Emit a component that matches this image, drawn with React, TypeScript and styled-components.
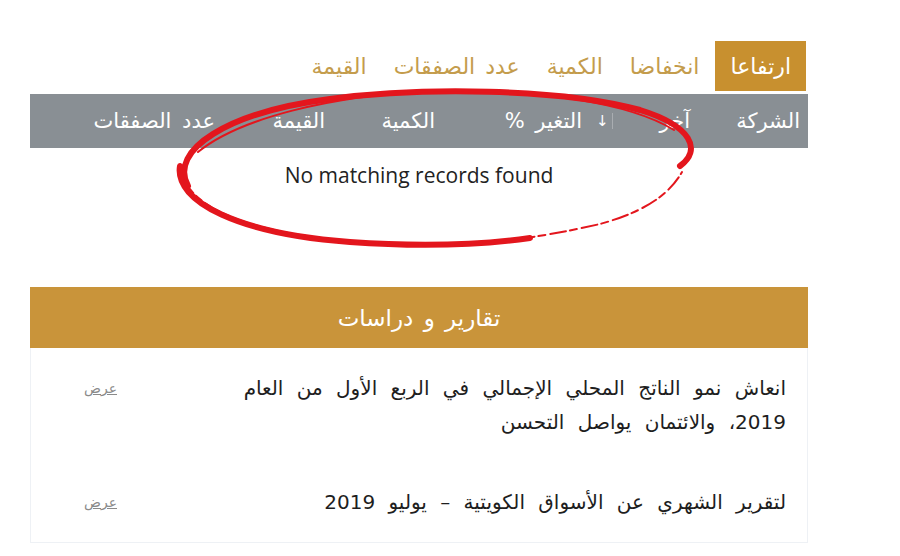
import React from "react";
import styled, { createGlobalStyle } from "styled-components";

const Global = createGlobalStyle`
  html, body { margin: 0; padding: 0; background: #ffffff; }
  body { font-family: "DejaVu Sans", "Noto Sans", sans-serif; }
  * { box-sizing: border-box; }
`;

const Page = styled.div`
  width: 900px;
  height: 556px;
  overflow: hidden;
  padding: 41px 0 0 30px;
  position: relative;
`;

const Column = styled.div`
  width: 778px;
  direction: rtl;
  display: flex;
  flex-direction: column;
`;

const Tabs = styled.div`
  display: flex;
  align-items: stretch;
  height: 50px;
  margin-right: 2px;
  gap: 5px;
`;

const Tab = styled.div<{ $active?: boolean }>`
  display: flex;
  align-items: center;
  padding: 0 ${(p) => (p.$active ? 15 : 11)}px;
  font-size: 22px;
  word-spacing: 3px;
  background: ${(p) => (p.$active ? "#c8902f" : "transparent")};
  color: ${(p) => (p.$active ? "#ffffff" : "#c49c4c")};
`;

const HeadRow = styled.div`
  margin-top: 3px;
  height: 54px;
  background: #898f94;
  display: flex;
  align-items: center;
  color: #ffffff;
  font-size: 21px;
  word-spacing: 4px;
`;

const HeadCell = styled.div<{ $w: number }>`
  width: ${(p) => p.$w}px;
  flex: none;
  padding-right: 8px;
  display: flex;
  align-items: center;
  justify-content: space-between;
  white-space: nowrap;
`;

const SortMark = styled.span`
  display: inline-flex;
  align-items: center;
  font-size: 15px;
  margin-left: 6px;
  padding-right: 3px;
  border-right: 1px solid #a9adb1;
  line-height: 16px;
`;

const EmptyRow = styled.div`
  height: 54px;
  display: flex;
  align-items: center;
  justify-content: center;
  font-family: "Open Sans", "Noto Sans", sans-serif;
  font-size: 21px;
  color: #222222;
  direction: ltr;
`;

const Panel = styled.div`
  margin-top: 85px;
  border: 1px solid #eef1f5;
  border-top: none;
`;

const PanelHead = styled.div`
  height: 61px;
  background: #c9943a;
  display: flex;
  align-items: center;
  justify-content: center;
  color: #ffffff;
  font-size: 23px;
  word-spacing: 3px;
  margin: 0 -1px;
`;

const Item = styled.div`
  display: flex;
  align-items: flex-start;
  padding: 23px 21px 23px 53px;
  gap: 40px;
`;

const ItemText = styled.div`
  flex: 1;
  font-size: 20px;
  word-spacing: 7px;
  line-height: 34px;
  color: #1e1e1e;
  white-space: nowrap;
`;

const ViewLink = styled.a`
  font-size: 14px;
  line-height: 34px;
  color: #8a8a8a;
  text-decoration: underline;
`;

const Scribble = styled.svg`
  position: absolute;
  left: 0;
  top: 0;
  pointer-events: none;
`;

export default function App() {
  return (
    <Page>
      <Global />
      <Column>
        <Tabs>
          <Tab $active>ارتفاعا</Tab>
          <Tab>انخفاضا</Tab>
          <Tab>الكمية</Tab>
          <Tab>عدد الصفقات</Tab>
          <Tab>القيمة</Tab>
        </Tabs>
        <HeadRow>
          <HeadCell $w={110}>الشركة</HeadCell>
          <HeadCell $w={108}>
            <span>آخر</span>
            <SortMark>↓</SortMark>
          </HeadCell>
          <HeadCell $w={147}>التغير %</HeadCell>
          <HeadCell $w={110}>الكمية</HeadCell>
          <HeadCell $w={110}>القيمة</HeadCell>
          <HeadCell $w={193}>عدد الصفقات</HeadCell>
        </HeadRow>
        <EmptyRow>No matching records found</EmptyRow>
        <Panel>
          <PanelHead>تقارير و دراسات</PanelHead>
          <Item>
            <ItemText>
              انعاش نمو الناتج المحلي الإجمالي في الربع الأول من العام
              <br />
              2019، والائتمان يواصل التحسن
            </ItemText>
            <ViewLink href="#">عرض</ViewLink>
          </Item>
          <Item>
            <ItemText>لتقرير الشهري عن الأسواق الكويتية – يوليو 2019</ItemText>
            <ViewLink href="#">عرض</ViewLink>
          </Item>
        </Panel>
      </Column>
      <Scribble width="900" height="556" viewBox="0 0 900 556">
        <path
          d="M 188 186 C 168 150, 228 112, 330 99 C 420 87, 560 88, 640 110 C 692 126, 702 150, 680 166"
          fill="none"
          stroke="#e3161d"
          strokeWidth="6"
          strokeLinecap="round"
        />
        <path
          d="M 180 166 C 174 202, 240 234, 350 242 C 420 247, 480 245, 530 238"
          fill="none"
          stroke="#e3161d"
          strokeWidth="6"
          strokeLinecap="round"
        />
        <path
          d="M 184 180 C 202 218, 282 240, 400 245 C 470 247, 530 240, 600 224 C 640 213, 668 197, 682 172"
          fill="none"
          stroke="#e3161d"
          strokeWidth="2"
          strokeDasharray="16 4 7 5"
          strokeLinecap="round"
        />
        <path
          d="M 198 152 C 240 118, 330 96, 430 91 C 540 89, 630 103, 674 130"
          fill="none"
          stroke="#e3161d"
          strokeWidth="2"
          strokeLinecap="round"
        />
      </Scribble>
    </Page>
  );
}
